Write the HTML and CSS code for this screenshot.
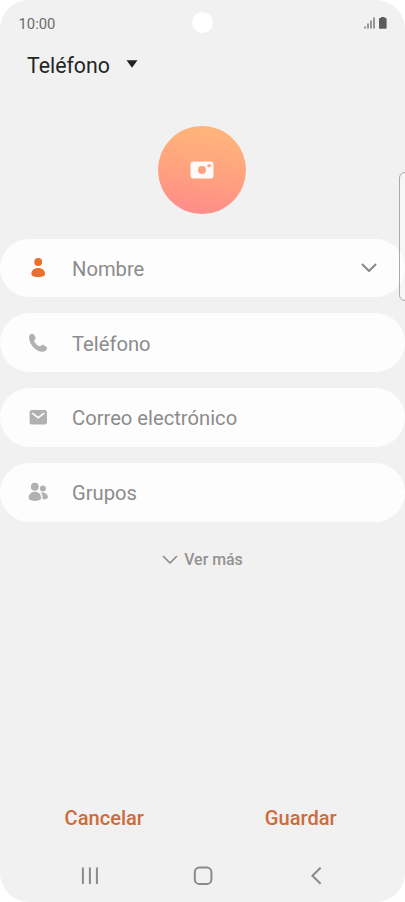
FILE: index.html
```html
<!DOCTYPE html>
<html lang="es">
<head>
  <meta charset="UTF-8">
  <title>Nuevo contacto</title>
  <link rel="stylesheet" href="styles.css">
</head>
<body>
  <div class="phone">
    <header class="status">
      <span class="time">10:00</span>
      <span class="camera-hole"></span>
      <svg class="status-icons" width="24" height="14" viewBox="0 0 24 14">
        <path d="M2 10.4v2M5 7.4v5M8 4.4v8M11 1.6v10.8" stroke="#666" stroke-width="1.3"/>
        <path d="M18 .9h3.6v1.2h1.2q.8 0 .8.8v9q0 .8-.8.8h-6q-.8 0-.8-.8v-9q0-.8.8-.8h1.2z" fill="#5c5c5c"/>
      </svg>
    </header>

    <div class="account">
      <span>Teléfono</span>
      <svg width="12" height="8" viewBox="0 0 12 8"><path d="M.5.3h11L6 7.8z" fill="#222"/></svg>
    </div>

    <div class="photo">
      <svg width="24" height="18" viewBox="0 0 24 18">
        <path fill-rule="evenodd" fill="#fffaf7" d="M3.5.5h17a3 3 0 0 1 3 3v11a3 3 0 0 1-3 3h-17a3 3 0 0 1-3-3v-11a3 3 0 0 1 3-3zM12 5a4 4 0 1 0 0 8 4 4 0 0 0 0-8zM19.1 3a1.8 1.8 0 1 0 0 3.6 1.8 1.8 0 0 0 0-3.6z"/>
      </svg>
    </div>

    <main class="fields">
      <div class="field">
        <svg class="icon person" viewBox="0 0 20 20">
          <circle cx="10.2" cy="4" r="3.9"/>
          <path d="M3.4 15.8c0-3.4 2.8-5.7 6.8-5.7s6.8 2.3 6.8 5.7c0 2.3-2 3.2-6.8 3.2s-6.8-.9-6.8-3.2z"/>
        </svg>
        <span class="label">Nombre</span>
        <svg class="expand" width="16" height="10" viewBox="0 0 16 10"><path d="M1.5 1.5L8 8l6.5-6.5"/></svg>
      </div>
      <div class="field">
        <svg class="icon" viewBox="0 0 20 20">
          <path d="M1 4.2C1.2 2.5 2.6.9 4 .8c1 0 1.6.4 2.1 1.1l1.1 1.8c.6 1 .5 1.9-.2 2.6l-.5.6c-.5.6-.5 1.1-.1 1.8 1 1.8 2.5 3.2 4.4 4.3.7.4 1.3.4 1.8-.1l.7-.6c.7-.7 1.7-.7 2.6-.1l1.9 1.2c1.2.7 1.6 1.6 1.1 2.7-.8 1.7-2.6 2.9-4.6 2.7C7.8 18.5 1.3 11.7 1 4.2z"/>
        </svg>
        <span class="label">Teléfono</span>
      </div>
      <div class="field">
        <svg class="icon" viewBox="0 0 20 20">
          <rect x="1.6" y="3" width="17.4" height="14.4" rx="2.2"/>
          <path class="flap" d="M4.2 6.1l6 4.6 6-4.6"/>
        </svg>
        <span class="label">Correo electrónico</span>
      </div>
      <div class="field">
        <svg class="icon" viewBox="0 0 20 20">
          <circle cx="6.8" cy="4.7" r="3.9"/>
          <circle cx="14.9" cy="6.4" r="3"/>
          <path d="M.7 15.6c0-3.4 2.4-5.8 6.2-5.8s6.2 2.4 6.2 5.8c0 2.3-1.8 3.3-6.2 3.3s-6.2-1-6.2-3.3z"/>
          <path d="M12.6 10.6c4.2-.6 7.3 1.6 7.3 4.3 0 1.6-1.3 2.3-5.4 2.3.4-2.6-.2-5-1.9-6.6z"/>
        </svg>
        <span class="label">Grupos</span>
      </div>
    </main>

    <div class="more">
      <svg width="16" height="10" viewBox="0 0 16 10"><path d="M1.5 1.5L8 8l6.5-6.5"/></svg>
      <span>Ver más</span>
    </div>

    <div class="actions">
      <span>Cancelar</span>
      <span>Guardar</span>
    </div>

    <nav class="navbar">
      <svg viewBox="0 0 20 20"><path d="M2.9 1.6v16.4M9.9 1.6v16.4M16.9 1.6v16.4"/></svg>
      <svg viewBox="0 0 20 20"><rect x="1.8" y="1.6" width="16.6" height="16.4" rx="4.6"/></svg>
      <svg viewBox="0 0 20 20"><path d="M15.6 1.8L7.4 9.8l8.2 8"/></svg>
    </nav>

    <div class="edge-panel"></div>
  </div>
</body>
</html>
```

FILE: styles.css
```css
* {
  box-sizing: border-box;
}

body {
  margin: 0;
  background: #fff;
  font-family: Roboto, "Liberation Sans", sans-serif;
}

svg {
  display: block;
}

.phone {
  position: relative;
  display: flex;
  flex-direction: column;
  width: 405px;
  height: 902px;
  overflow: hidden;
  border-radius: 29px;
  background: #f1f1f1;
}

.status {
  display: grid;
  grid-template-columns: 1fr 21px 1fr;
  align-items: center;
  height: 45px;
  padding: 0 18px;
}

.time {
  color: #6b6b6b;
  font-size: 14.8px;
  line-height: 17px;
  padding: 3px 0 0 0.5px;
}

.camera-hole {
  width: 21px;
  height: 21px;
  border-radius: 50%;
  background: #fff;
}

.status-icons {
  justify-self: end;
}

.account {
  display: flex;
  align-items: center;
  gap: 16px;
  height: 42px;
  padding-left: 27px;
  color: #252525;
  font-size: 21.3px;
  line-height: 24px;
}

.account svg {
  margin-top: -4px;
}

.photo {
  display: flex;
  align-items: center;
  justify-content: center;
  align-self: center;
  width: 88px;
  height: 88px;
  margin-top: 39px;
  margin-right: 1px;
  border-radius: 50%;
  background: linear-gradient(190deg, #ffb27c 15%, #ff9e80 60%, #ff8b8b 95%);
}

.fields {
  display: flex;
  flex-direction: column;
  gap: 16px;
  margin-top: 24.5px;
}

.field {
  display: flex;
  align-items: center;
  height: 58.8px;
  padding: 0 28px;
  border-radius: 30px;
  background: #fdfdfd;
}

.icon {
  width: 20px;
  height: 20px;
  margin-right: 24px;
  fill: #b1b1b1;
}

.person {
  fill: #e9702e;
}

.flap {
  fill: none;
  stroke: #fdfdfd;
  stroke-width: 1.5;
}

.label {
  flex: 1;
  color: #8c8c8c;
  font-size: 20.2px;
  line-height: 24px;
  padding-top: 2px;
}

.expand,
.more svg {
  fill: none;
  stroke: #888;
  stroke-width: 2;
  stroke-linecap: round;
  stroke-linejoin: round;
}

.more {
  display: flex;
  align-items: center;
  justify-content: center;
  gap: 6px;
  height: 24px;
  margin-top: 26px;
  color: #929292;
  font-size: 15.9px;
  font-weight: 500;
}

.more svg {
  stroke-width: 1.6;
}

.actions {
  display: grid;
  grid-template-columns: 1fr 1fr;
  margin-top: auto;
  padding: 0 6px;
  color: #cd6b3b;
  font-size: 20.1px;
  font-weight: 500;
  line-height: 24px;
  text-align: center;
}

.navbar {
  display: flex;
  justify-content: space-between;
  height: 72px;
  padding: 36px 80px 0;
}

.navbar svg {
  width: 20px;
  height: 20px;
  fill: none;
  stroke: #8a8a8a;
  stroke-width: 2;
}

/* handle of the side panel, cut off by the screen edge */
.edge-panel {
  position: absolute;
  top: 172px;
  right: -6px;
  width: 12px;
  height: 129px;
  border: 1px solid #aaa;
  border-radius: 6px;
  background: rgba(255, 255, 255, 0.4);
}
```
